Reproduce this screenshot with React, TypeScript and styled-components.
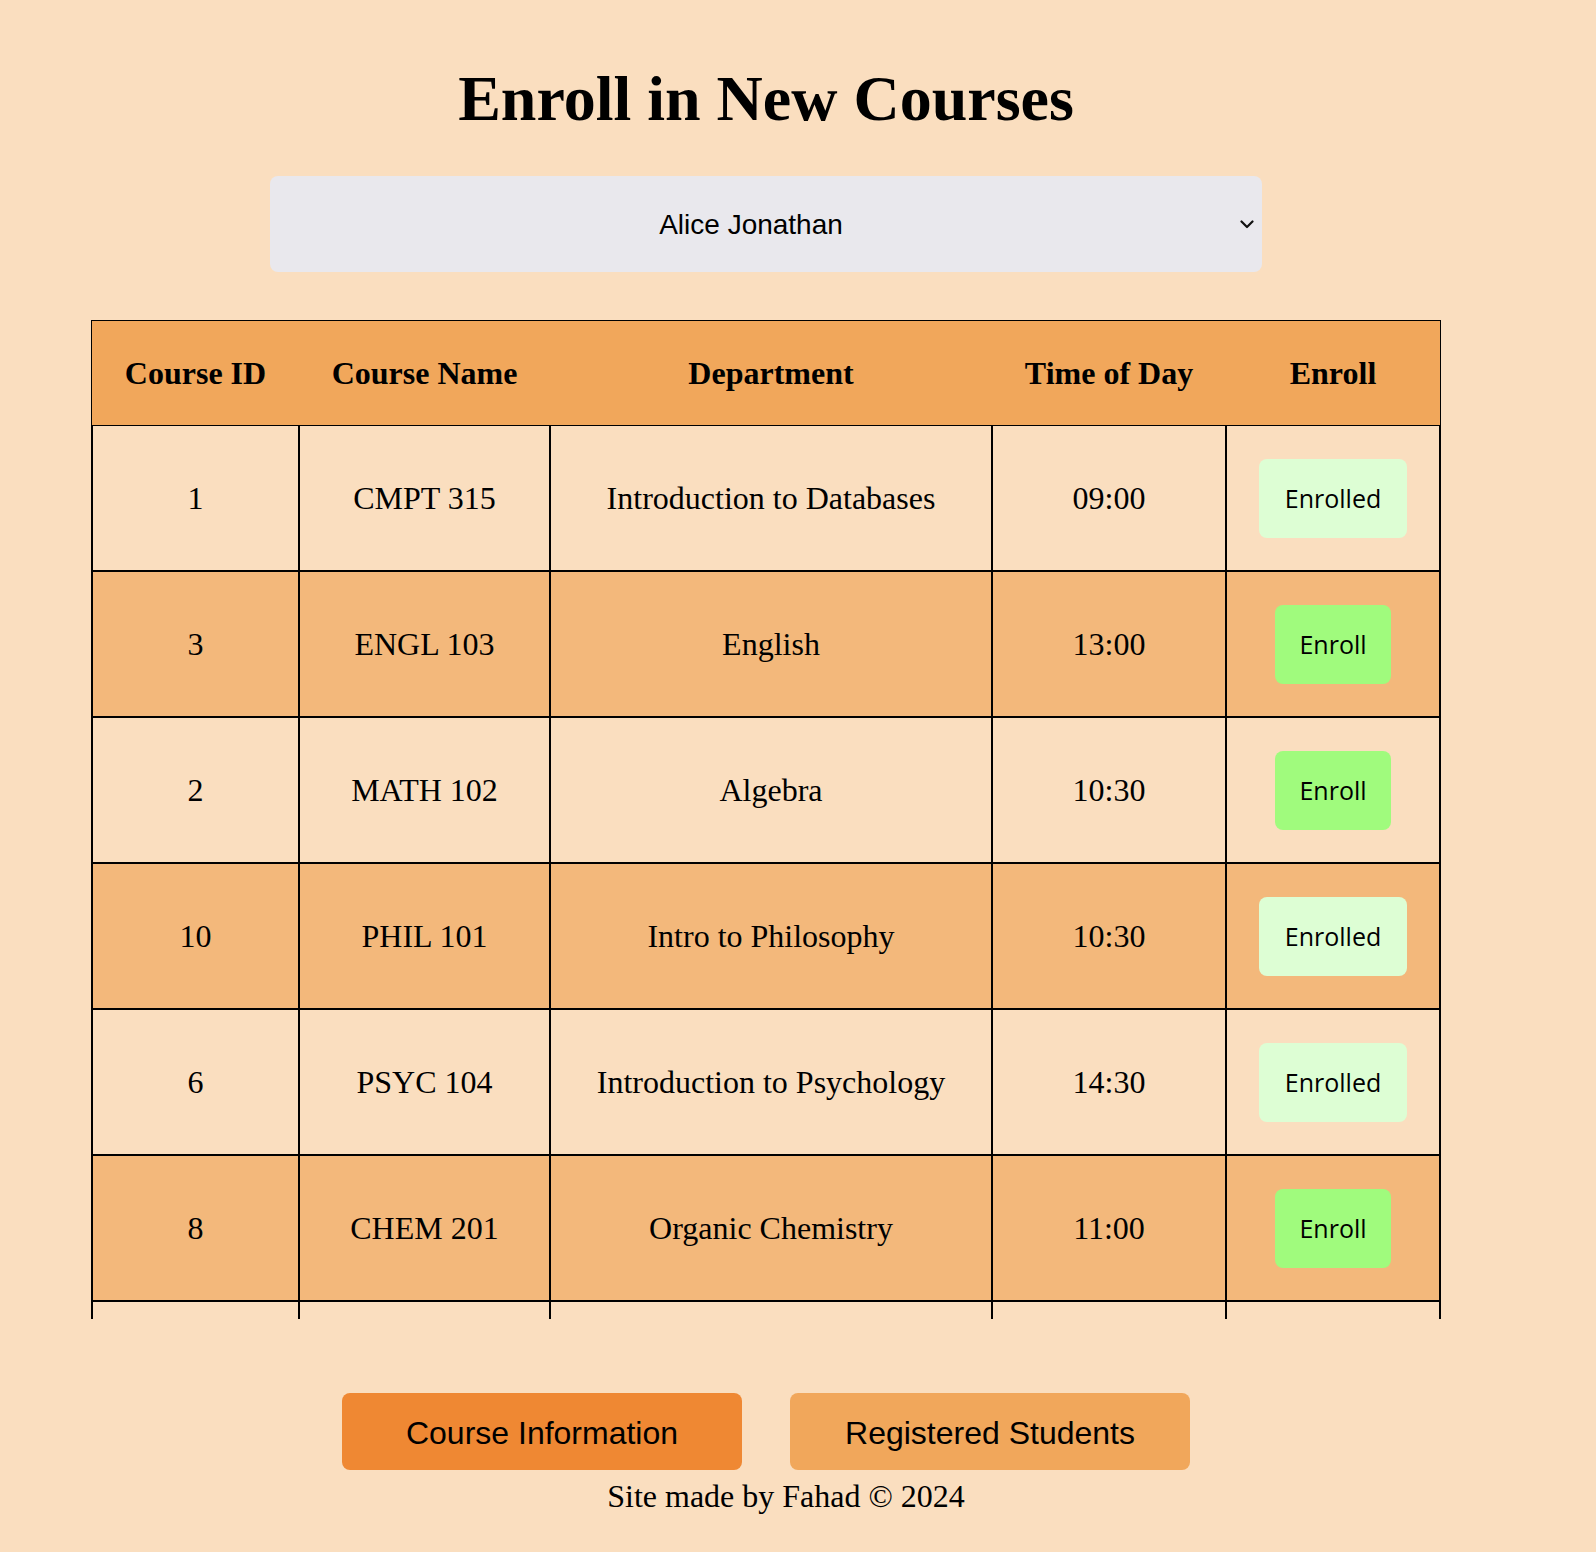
import React, { useState } from "react";
import styled, { createGlobalStyle } from "styled-components";

const GlobalStyle = createGlobalStyle`
  html, body {
    margin: 0;
    padding: 0;
    background: #fadebf;
  }
  body {
    font-family: "Liberation Serif", "Times New Roman", serif;
    color: #000;
  }
`;

const Page = styled.div`
  width: 1596px;
  min-height: 1552px;
  background: #fadebf;
`;

const Main = styled.main`
  width: 1532px;
  padding-top: 62px;
  display: flex;
  flex-direction: column;
  align-items: center;
`;

const Title = styled.h1`
  margin: 0;
  font-family: "Liberation Serif", "Times New Roman", serif;
  font-size: 64px;
  line-height: 74px;
  font-weight: 700;
  text-align: center;
`;

const SelectWrap = styled.div`
  position: relative;
  margin-top: 40px;
  width: 992px;
  height: 96px;
`;

const StudentSelect = styled.select`
  appearance: none;
  -webkit-appearance: none;
  width: 100%;
  height: 100%;
  border: none;
  outline: none;
  border-radius: 8px;
  background: #e9e8ed;
  color: #000;
  font-family: "Liberation Sans", Arial, sans-serif;
  font-size: 28px;
  text-align: center;
  text-align-last: center;
  padding: 0 30px 0 0;
  margin: 0;
`;

const Chevron = styled.svg`
  position: absolute;
  right: 8px;
  top: 44px;
  width: 14px;
  height: 9px;
  pointer-events: none;
`;

const TableScroll = styled.div`
  margin-top: 48px;
  width: 1350px;
  height: 999px;
  overflow-y: auto;
  scrollbar-width: none;
  &::-webkit-scrollbar {
    display: none;
  }
`;

const Table = styled.table`
  width: 1350px;
  table-layout: fixed;
  border-collapse: separate;
  border-spacing: 0;
  border: 1px solid #000;
  font-family: "Liberation Serif", "Times New Roman", serif;
  font-size: 32px;
`;

const HeadCell = styled.th`
  height: 104px;
  padding: 0;
  background: #f1a75b;
  font-weight: 700;
  line-height: 37px;
  text-align: center;
  vertical-align: middle;
`;

const Row = styled.tr<{ $alt: boolean }>`
  background: ${(p) => (p.$alt ? "#f3b87b" : "#fadebf")};
`;

const Cell = styled.td`
  height: 144px;
  padding: 0;
  border: 1px solid #000;
  line-height: 37px;
  text-align: center;
  vertical-align: middle;
`;

const EnrollButton = styled.button<{ $enrolled: boolean }>`
  display: block;
  margin: 0 auto;
  border: none;
  border-radius: 8px;
  padding: 22px ${(p) => (p.$enrolled ? "26px" : "24px")};
  line-height: 35px;
  font-family: "Open Sans", sans-serif;
  font-size: 25px;
  color: #000;
  background: ${(p) => (p.$enrolled ? "#ddfed4" : "#a0fb7d")};
  cursor: pointer;
`;

const NavRow = styled.nav`
  margin-top: 74px;
  display: flex;
  gap: 48px;
  justify-content: center;
`;

const NavButton = styled.button<{ $primary?: boolean }>`
  width: 400px;
  height: 77px;
  border: none;
  border-radius: 8px;
  padding: 4px 0 0;
  font-family: "Liberation Sans", Arial, sans-serif;
  font-size: 32px;
  color: #000;
  background: ${(p) => (p.$primary ? "#ef8833" : "#f1a75b")};
  cursor: pointer;
`;

const Footer = styled.footer`
  width: 1572px;
  margin-top: 8px;
  font-family: "Liberation Serif", "Times New Roman", serif;
  font-size: 32px;
  line-height: 37px;
  text-align: center;
`;

type Course = {
  id: number;
  name: string;
  dept: string;
  time: string;
  enrolled: boolean;
};

const initialCourses: Course[] = [
  { id: 1, name: "CMPT 315", dept: "Introduction to Databases", time: "09:00", enrolled: true },
  { id: 3, name: "ENGL 103", dept: "English", time: "13:00", enrolled: false },
  { id: 2, name: "MATH 102", dept: "Algebra", time: "10:30", enrolled: false },
  { id: 10, name: "PHIL 101", dept: "Intro to Philosophy", time: "10:30", enrolled: true },
  { id: 6, name: "PSYC 104", dept: "Introduction to Psychology", time: "14:30", enrolled: true },
  { id: 8, name: "CHEM 201", dept: "Organic Chemistry", time: "11:00", enrolled: false },
  { id: 4, name: "BIOL 110", dept: "Biology", time: "08:30", enrolled: false },
];

const colWidths = [207, 251, 442, 234, 214];

export default function App() {
  const [courses, setCourses] = useState<Course[]>(initialCourses);
  const [student, setStudent] = useState("Alice Jonathan");

  const enroll = (id: number) =>
    setCourses((cs) => cs.map((c) => (c.id === id ? { ...c, enrolled: true } : c)));

  return (
    <Page>
      <GlobalStyle />
      <Main>
        <Title>Enroll in New Courses</Title>
        <SelectWrap>
          <StudentSelect value={student} onChange={(e) => setStudent(e.target.value)}>
            <option>Alice Jonathan</option>
            <option>Bob Smith</option>
            <option>Carol White</option>
          </StudentSelect>
          <Chevron viewBox="0 0 14 9" fill="none">
            <polyline
              points="1.5,1.5 7,7 12.5,1.5"
              stroke="#111"
              strokeWidth="2.2"
              strokeLinecap="round"
              strokeLinejoin="round"
            />
          </Chevron>
        </SelectWrap>
        <TableScroll>
          <Table>
            <colgroup>
              {colWidths.map((w, i) => (
                <col key={i} width={w} />
              ))}
            </colgroup>
            <thead>
              <tr>
                <HeadCell>Course ID</HeadCell>
                <HeadCell>Course Name</HeadCell>
                <HeadCell>Department</HeadCell>
                <HeadCell>Time of Day</HeadCell>
                <HeadCell>Enroll</HeadCell>
              </tr>
            </thead>
            <tbody>
              {courses.map((c, i) => (
                <Row key={c.id} $alt={i % 2 === 1}>
                  <Cell>{c.id}</Cell>
                  <Cell>{c.name}</Cell>
                  <Cell>{c.dept}</Cell>
                  <Cell>{c.time}</Cell>
                  <Cell>
                    <EnrollButton $enrolled={c.enrolled} onClick={() => enroll(c.id)}>
                      {c.enrolled ? "Enrolled" : "Enroll"}
                    </EnrollButton>
                  </Cell>
                </Row>
              ))}
            </tbody>
          </Table>
        </TableScroll>
        <NavRow>
          <NavButton $primary>Course Information</NavButton>
          <NavButton>Registered Students</NavButton>
        </NavRow>
      </Main>
      <Footer>Site made by Fahad © 2024</Footer>
    </Page>
  );
}
